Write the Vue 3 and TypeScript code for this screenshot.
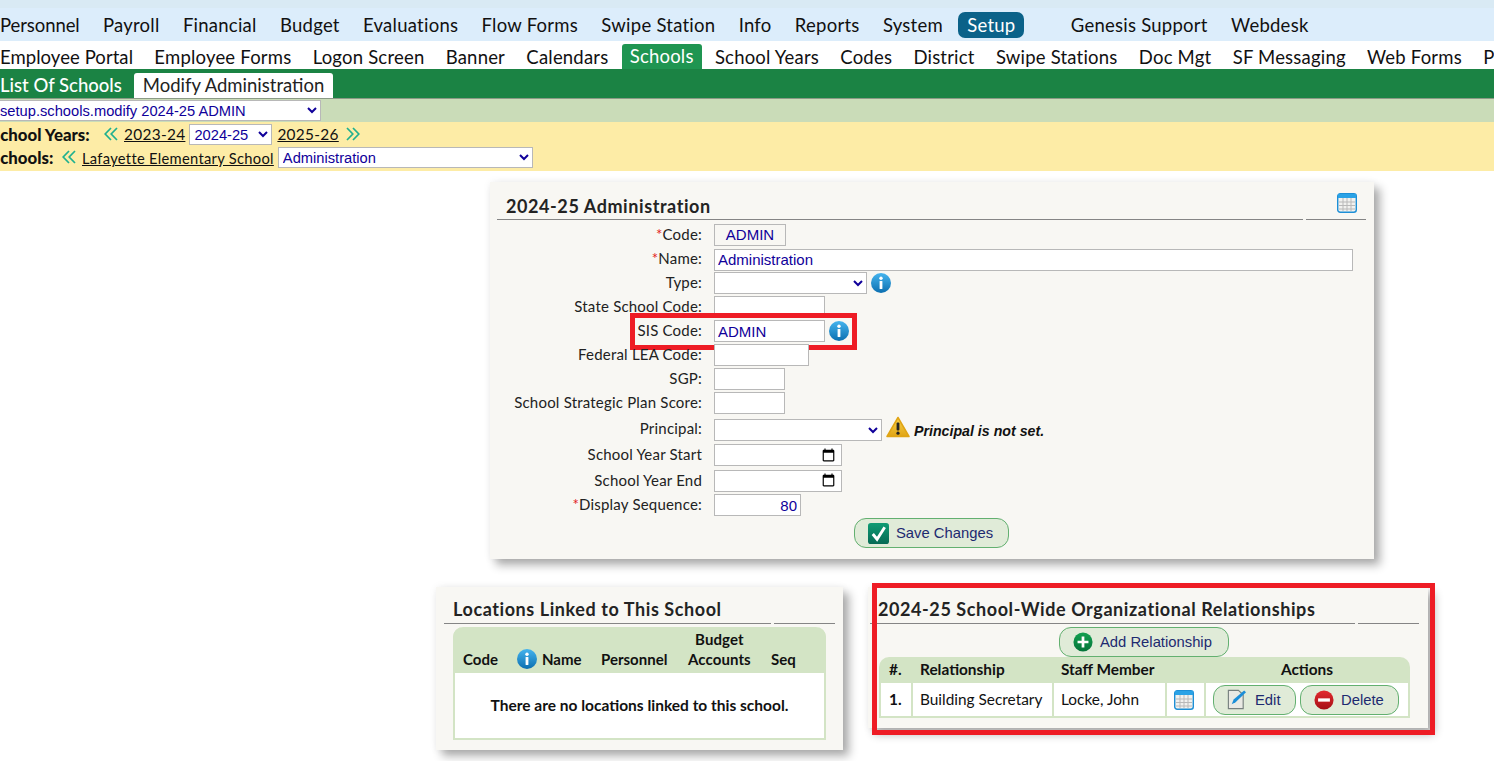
<script setup lang="ts">
const topNav = ['Personnel', 'Payroll', 'Financial', 'Budget', 'Evaluations', 'Flow Forms', 'Swipe Station', 'Info', 'Reports', 'System']
const subNav = ['Employee Portal', 'Employee Forms', 'Logon Screen', 'Banner', 'Calendars', 'Schools', 'School Years', 'Codes', 'District', 'Swipe Stations', 'Doc Mgt', 'SF Messaging', 'Web Forms', 'P']
</script>

<template>
  <div class="page">
    <svg class="defs" width="0" height="0" aria-hidden="true">
      <defs>
        <linearGradient id="gBlue" x1="0" y1="0" x2="0" y2="1"><stop offset="0" stop-color="#45b4ee" /><stop offset="1" stop-color="#0c6fb0" /></linearGradient>
        <linearGradient id="gGreen" x1="0" y1="0" x2="0" y2="1"><stop offset="0" stop-color="#0f9c74" /><stop offset="1" stop-color="#066a55" /></linearGradient>
        <linearGradient id="gPlus" x1="0" y1="0" x2="0" y2="1"><stop offset="0" stop-color="#12a150" /><stop offset="1" stop-color="#05743a" /></linearGradient>
        <linearGradient id="gRed" x1="0" y1="0" x2="0" y2="1"><stop offset="0" stop-color="#e32a30" /><stop offset="1" stop-color="#a50f16" /></linearGradient>
        <linearGradient id="gWarn" x1="0" y1="0" x2="0" y2="1"><stop offset="0" stop-color="#f8d24c" /><stop offset="1" stop-color="#e0a414" /></linearGradient>
        <symbol id="iInfo" viewBox="0 0 20 20">
          <circle cx="10" cy="10" r="10" fill="url(#gBlue)" />
          <circle cx="10" cy="5.2" r="1.7" fill="#fff" />
          <rect x="8.6" y="8" width="2.8" height="8" rx=".6" fill="#fff" />
        </symbol>
        <symbol id="iCal" viewBox="0 0 20 20">
          <rect x=".7" y=".7" width="18.6" height="18.6" rx="2.5" fill="#f1f1ef" stroke="#1d8fd6" stroke-width="1.4" />
          <rect x="1" y="1" width="18" height="4" fill="#2aa2e6" />
          <path d="M2 9h16M2 12.5h16M2 16h16M6 5v13M10 5v13M14 5v13" stroke="#b9b9b9" stroke-width="1" fill="none" />
        </symbol>
        <symbol id="iBack" viewBox="0 0 14 14">
          <path d="M7 1 1.2 7 7 13M13 1 7.2 7 13 13" fill="none" stroke="#1fb08f" stroke-width="1.7" />
        </symbol>
        <symbol id="iNext" viewBox="0 0 14 14">
          <path d="M1 1 6.8 7 1 13M7 1 12.8 7 7 13" fill="none" stroke="#1fb08f" stroke-width="1.7" />
        </symbol>
      </defs>
    </svg>

    <div class="strip"></div>
    <nav class="nav-top">
      <a v-for="item in topNav" :key="item" class="nav-item">{{ item }}</a>
      <a class="nav-item setup">Setup</a>
      <a class="nav-item support">Genesis Support</a>
      <a class="nav-item">Webdesk</a>
    </nav>
    <nav class="nav-sub">
      <a v-for="item in subNav" :key="item" class="nav-item" :class="{ current: item === 'Schools' }">{{ item }}</a>
    </nav>
    <div class="tabs">
      <span class="tab">List Of Schools</span>
      <span class="tab active">Modify Administration</span>
    </div>
    <div class="crumb">
      <select class="ctl crumb-select"><option>setup.schools.modify 2024-25 ADMIN</option></select>
    </div>
    <div class="filter">
      <div class="filter-row">
        <b class="filter-label years">School Years:</b>
        <svg class="chev"><use href="#iBack" /></svg>
        <a class="link">2023-24</a>
        <select class="ctl year-select"><option>2024-25</option></select>
        <a class="link">2025-26</a>
        <svg class="chev next"><use href="#iNext" /></svg>
      </div>
      <div class="filter-row">
        <b class="filter-label schools">Schools:</b>
        <svg class="chev"><use href="#iBack" /></svg>
        <a class="link small">Lafayette Elementary School</a>
        <select class="ctl school-select"><option>Administration</option></select>
      </div>
    </div>

    <section class="panel panel-form">
      <header class="head">
        <h2>2024-25 Administration</h2>
        <div class="head-side"><svg class="cal-top"><use href="#iCal" /></svg></div>
      </header>
      <div class="form">
        <div class="row">
          <label><i>*</i>Code:</label>
          <div class="static">ADMIN</div>
        </div>
        <div class="row">
          <label><i>*</i>Name:</label>
          <input class="ctl w-name" value="Administration" />
        </div>
        <div class="row">
          <label>Type:</label>
          <select class="ctl w-type"><option></option></select>
          <svg class="info"><use href="#iInfo" /></svg>
        </div>
        <div class="row">
          <label>State School Code:</label>
          <input class="ctl w-111" />
        </div>
        <div class="row">
          <label>SIS Code:</label>
          <input class="ctl w-111" value="ADMIN" />
          <svg class="info"><use href="#iInfo" /></svg>
          <div class="mark mark-sis"></div>
        </div>
        <div class="row">
          <label>Federal LEA Code:</label>
          <input class="ctl w-95" />
        </div>
        <div class="row">
          <label>SGP:</label>
          <input class="ctl w-71" />
        </div>
        <div class="row">
          <label>School Strategic Plan Score:</label>
          <input class="ctl w-71" />
        </div>
        <div class="row tall">
          <label>Principal:</label>
          <select class="ctl w-principal"><option></option></select>
          <svg class="warn" viewBox="0 0 24 22">
            <path d="M12 1.5 23 20.5H1Z" fill="url(#gWarn)" stroke="#e0a414" stroke-width="1.5" stroke-linejoin="round" />
            <rect x="10.6" y="6.5" width="2.8" height="8" rx="1" fill="#222" />
            <circle cx="12" cy="17.2" r="1.6" fill="#222" />
          </svg>
          <em class="warn-text">Principal is not set.</em>
        </div>
        <div class="row date">
          <label>School Year Start</label>
          <input class="ctl w-date" type="date" />
        </div>
        <div class="row date-b">
          <label>School Year End</label>
          <input class="ctl w-date" type="date" />
        </div>
        <div class="row">
          <label><i>*</i>Display Sequence:</label>
          <input class="ctl w-seq" value="80" />
        </div>
        <div class="save-row">
          <button class="btn save" type="button">
            <svg class="btn-icon" viewBox="0 0 22 22">
              <rect width="22" height="22" rx="3" fill="url(#gGreen)" />
              <path d="M5 11.5 9.5 17 17.5 4.5" fill="none" stroke="#fff" stroke-width="3" />
            </svg>
            Save Changes
          </button>
        </div>
      </div>
    </section>

    <div class="lower">
      <section class="panel panel-loc">
        <header class="head">
          <h2>Locations Linked to This School</h2>
          <div class="head-side"></div>
        </header>
        <div class="loc">
          <div class="loc-head">
            <span class="c-code">Code</span>
            <span class="c-name"><svg class="info-th"><use href="#iInfo" /></svg>Name</span>
            <span class="c-pers">Personnel</span>
            <span class="c-acct">Budget<br />Accounts</span>
            <span class="c-seq">Seq</span>
          </div>
          <div class="loc-empty">There are no locations linked to this school.</div>
        </div>
      </section>

      <section class="panel panel-rel">
        <header class="head">
          <h2>2024-25 School-Wide Organizational Relationships</h2>
          <div class="head-side"></div>
        </header>
        <div class="add-row">
          <button class="btn add" type="button">
            <svg class="btn-icon" viewBox="0 0 22 22">
              <circle cx="11" cy="11" r="10.5" fill="url(#gPlus)" />
              <path d="M11 5v12M5 11h12" stroke="#fff" stroke-width="3" />
            </svg>
            Add Relationship
          </button>
        </div>
        <table class="rel">
          <thead>
            <tr>
              <th class="t-num">#.</th>
              <th class="t-rel">Relationship</th>
              <th class="t-staff">Staff Member</th>
              <th class="t-cal"></th>
              <th class="t-act">Actions</th>
            </tr>
          </thead>
          <tbody>
            <tr>
              <td class="t-num"><b>1.</b></td>
              <td>Building Secretary</td>
              <td>Locke, John</td>
              <td class="t-cal"><svg class="cal-cell"><use href="#iCal" /></svg></td>
              <td class="t-act">
                <div class="actions">
                  <button class="btn edit" type="button">
                    <svg class="btn-icon" viewBox="0 0 22 22">
                      <path d="M2.5 1.5H13L18 6V20.5H2.5Z" fill="#e9e9e4" stroke="#77807f" stroke-width="1.2" />
                      <path d="M6 16 8 11 19 1.5 21 3.5 10 14Z" fill="#1b8ed8" />
                    </svg>
                    Edit
                  </button>
                  <button class="btn del" type="button">
                    <svg class="btn-icon" viewBox="0 0 22 22">
                      <circle cx="11" cy="11" r="10.5" fill="url(#gRed)" />
                      <rect x="4.5" y="9.2" width="13" height="3.6" fill="#fff" />
                    </svg>
                    Delete
                  </button>
                </div>
              </td>
            </tr>
          </tbody>
        </table>
        <div class="mark mark-rel"></div>
      </section>
    </div>
  </div>
</template>

<style>
html, body { margin: 0; background: #fff; }
</style>

<style scoped>
.page {
  position: relative;
  width: 1494px;
  height: 761px;
  overflow: hidden;
  font-family: Lato, "Open Sans", sans-serif;
  color: #111;
  background: #fff;
}
.defs { position: absolute; }
.strip { height: 8px; background: #d9eaf4; }
.nav-top {
  height: 33px;
  background: #dcedfb;
  display: flex;
  align-items: center;
  gap: 23.3px;
}
.nav-sub {
  height: 28px;
  background: #fff;
  display: flex;
  align-items: stretch;
  gap: 21.3px;
  white-space: nowrap;
}
.nav-item { font-size: 18.5px; line-height: 26px; letter-spacing: .25px; color: #111; }
.nav-top .nav-item:first-child { letter-spacing: -.08px; }
.nav-sub .nav-item { line-height: 27px; padding-top: 3px; box-sizing: border-box; letter-spacing: .2px; }
.nav-sub .nav-item:first-child { letter-spacing: .06px; }
.setup {
  background: #0b6289;
  color: #fff;
  border-radius: 7px;
  padding: 0 9px;
  margin-left: -8px;
}
.support { margin-left: 23px; }
.nav-sub .current {
  background: #1f9551;
  color: #fff;
  padding: 0 8px;
  margin: 3px -8px 0;
  line-height: 25px;
  border-radius: 3px 3px 0 0;
}
.tabs {
  height: 29px;
  background: #1b8344;
  display: flex;
  align-items: flex-end;
  gap: 12px;
  box-sizing: border-box;
}
.tab { font-size: 18.5px; line-height: 25px; color: #fff; font-weight: 500; }
.tab.active {
  background: #fff;
  color: #222;
  padding: 0 9px;
  border-radius: 3px 3px 0 0;
  font-weight: 400;
}
.crumb {
  height: 24px;
  background: #cadcb8;
  border-top: 1px solid #8b9a86;
  box-sizing: border-box;
  display: flex;
  align-items: center;
}
.ctl {
  font-family: "Liberation Sans", Arial, sans-serif;
  font-size: 15px;
  color: #10009a;
  background: #fff;
  border: 1px solid #b8b8b8;
  border-radius: 0;
  box-sizing: border-box;
  height: 22px;
  padding: 0 3px;
  margin: 0;
  outline: none;
}
select.ctl { font-size: 14.7px; padding: 0; }
.crumb-select { width: 326px; height: 21px; margin-left: -5px; }
.filter {
  height: 49px;
  background: #fdeca6;
  display: flex;
  flex-direction: column;
  padding-top: 1px;
  box-sizing: border-box;
}
.filter-row { display: flex; align-items: center; height: 23px; white-space: nowrap; }
.filter-label { font-size: 16.8px; font-weight: 900; color: #111; flex: none; }
.years { margin-left: -9px; width: 113px; }
.schools { margin-left: -9px; width: 71px; }
.chev { width: 14px; height: 14px; margin: -1px 6px 0 0; flex: none; }
.chev.next { margin: -1px 0 0 7px; }
.link { font-size: 15.4px; letter-spacing: .3px; text-decoration: underline; color: #111; margin-top: -2px; }
.link.small { font-size: 14.7px; letter-spacing: .3px; margin-top: 0; }
.year-select { width: 83px; margin: 0 5px 0 4px; height: 21px; }
.school-select { width: 255px; margin-left: 4px; height: 21px; }

.panel {
  background: #f8f7f3;
  box-shadow: 6px 6px 9px rgba(0, 0, 0, .32), 0 0 8px rgba(0, 0, 0, .06);
  box-sizing: border-box;
}
.head { display: flex; gap: 3px; height: 38px; margin: 0 8px 0 7px; }
.head h2 {
  flex: 1;
  margin: 0;
  font-size: 18px;
  font-weight: 700;
  letter-spacing: .58px;
  color: #232323;
  line-height: 20px;
  padding: 14px 0 0 9px;
  border-bottom: 1px solid #858585;
  box-sizing: border-box;
  white-space: nowrap;
}
.head-side {
  width: 60px;
  border-bottom: 1px solid #858585;
  position: relative;
}
.cal-top { position: absolute; right: 9px; top: 11px; width: 20px; height: 20px; }

.panel-form { width: 884px; height: 377px; margin: 11px 0 0 490px; }
.form { padding-top: 3px; }
.row { position: relative; display: flex; align-items: center; height: 24px; }
.row.tall { height: 27px; }
.row.date { height: 26px; }
.row.date-b { height: 25px; }
.row label {
  width: 212px;
  margin: -2px 12px 0 0;
  text-align: right;
  font-size: 15px;
  letter-spacing: .2px;
  color: #222;
  white-space: nowrap;
}
.row label i { color: #e21b1b; font-style: normal; }
.static {
  width: 72px;
  height: 22px;
  border: 1px solid #b8b8b8;
  box-sizing: border-box;
  text-align: center;
  font: 15px/20px "Liberation Sans", Arial, sans-serif;
  color: #10009a;
}
.w-name { width: 639px; margin-top: 1px; }
.w-type { width: 153px; }
.w-111 { width: 111px; }
.w-95 { width: 95px; }
.w-71 { width: 71px; }
.w-principal { width: 168px; margin-top: 2px; }
.w-date { width: 128px; }
.w-date::-webkit-datetime-edit { visibility: hidden; }
.w-seq { width: 87px; text-align: right; }
.info { width: 20px; height: 20px; margin-left: 4px; }
.warn { width: 24px; height: 22px; margin: -3px 0 0 4px; }
.warn-text {
  margin: 4px 0 0 4px;
  font-family: "Liberation Sans", Arial, sans-serif;
  font-weight: 700;
  font-style: italic;
  font-size: 14.2px;
  color: #111;
}
.save-row { display: flex; justify-content: flex-start; padding: 1px 0 0 364px; }
.btn {
  display: inline-flex;
  align-items: center;
  gap: 7px;
  box-sizing: border-box;
  height: 30px;
  border: 1px solid #63b070;
  border-radius: 12px;
  background: #e0ebd8;
  font-family: "Liberation Sans", Arial, sans-serif;
  font-size: 14.8px;
  line-height: 16px;
  color: #1d2a70;
  padding: 0 0 0 13px;
  margin: 0;
}
.btn-icon { width: 20px; height: 20px; flex: none; }
.save { width: 155px; }
.save .btn-icon { width: 21px; height: 21px; }
.mark { position: absolute; box-sizing: border-box; border: 5px solid #ee1c25; pointer-events: none; }
.mark-sis { left: 140px; top: -6px; width: 227px; height: 37px; }

.lower { display: flex; align-items: flex-start; gap: 25px; margin: 28px 0 0 436px; }
.panel-loc { width: 407px; height: 163px; }
.panel-loc .head { height: 37px; margin: 0 8px; }
.panel-loc .head h2, .panel-rel .head h2 { padding-top: 12px; }
.panel-loc .head-side { width: 61px; }
.loc { margin: 3px 0 0 17px; width: 373px; border: 2px solid #d3e4c5; border-top: 0; border-radius: 10px 10px 0 0; box-sizing: border-box; background: #fff; height: 113px; }
.loc-head {
  height: 46px;
  margin: 0 -2px;
  background: #d3e4c5;
  border-radius: 10px 10px 0 0;
  position: relative;
  font-size: 15px;
  font-weight: 700;
  line-height: 20px;
}
.loc-head span { position: absolute; bottom: 4px; white-space: nowrap; }
.c-code { left: 10px; }
.c-name { left: 64px; display: flex; align-items: center; gap: 5px; }
.info-th { width: 20px; height: 20px; }
.c-pers { left: 148px; }
.c-acct { left: 235px; text-align: center; letter-spacing: .1px; }
.c-seq { left: 318px; }
.loc-empty { text-align: center; font-size: 15.5px; font-weight: 700; line-height: 20px; padding-top: 22px; }

.panel-rel { position: relative; width: 560px; height: 141px; }
.panel-rel .head { height: 37px; margin: 0 9px 0 2px; }
.panel-rel .head h2 { padding-left: 8px; }
.panel-rel .head-side { width: 61px; }
.add-row { display: flex; padding: 3px 0 0 191px; height: 33px; box-sizing: border-box; }
.add { width: 170px; height: 30px; }
.rel {
  margin-left: 11px;
  width: 531px;
  border-collapse: separate;
  border-spacing: 0;
  table-layout: fixed;
  font-size: 15.4px;
  color: #111;
  border-bottom: 2px solid #d3e4c5;
}
.rel th {
  background: #d3e4c5;
  height: 26px;
  padding: 0 0 2px 9px;
  box-sizing: border-box;
  text-align: left;
  font-weight: 700;
  line-height: 18px;
}
.rel th:first-child { border-radius: 10px 0 0 0; }
.rel th:last-child { border-radius: 0 10px 0 0; }
.rel td {
  background: #fff;
  height: 33px;
  padding: 0 0 2px 7px;
  border-left: 2px solid #d3e4c5;
  box-sizing: border-box;
  white-space: nowrap;
}
.rel td:last-child { border-right: 2px solid #d3e4c5; }
.rel .t-num { width: 32px; padding-left: 10px; }
.rel td.t-num { padding-left: 8px; }
.rel .t-rel { width: 141px; }
.rel .t-staff { width: 113px; }
.rel .t-cal { width: 39px; padding: 0; text-align: center; }
.rel th.t-act { text-align: center; padding: 0 0 2px; }
.rel td.t-act { padding: 0; }
.cal-cell { width: 20px; height: 20px; display: block; margin: 0 0 0 7px; }
.actions { display: flex; gap: 4px; padding-left: 7px; }
.edit { width: 83px; height: 30px; padding-left: 12px; gap: 8px; }
.edit .btn-icon { width: 21px; height: 21px; }
.del { width: 99px; height: 30px; }
.mark-rel { left: 4px; top: -4px; width: 563px; height: 152px; }
</style>
